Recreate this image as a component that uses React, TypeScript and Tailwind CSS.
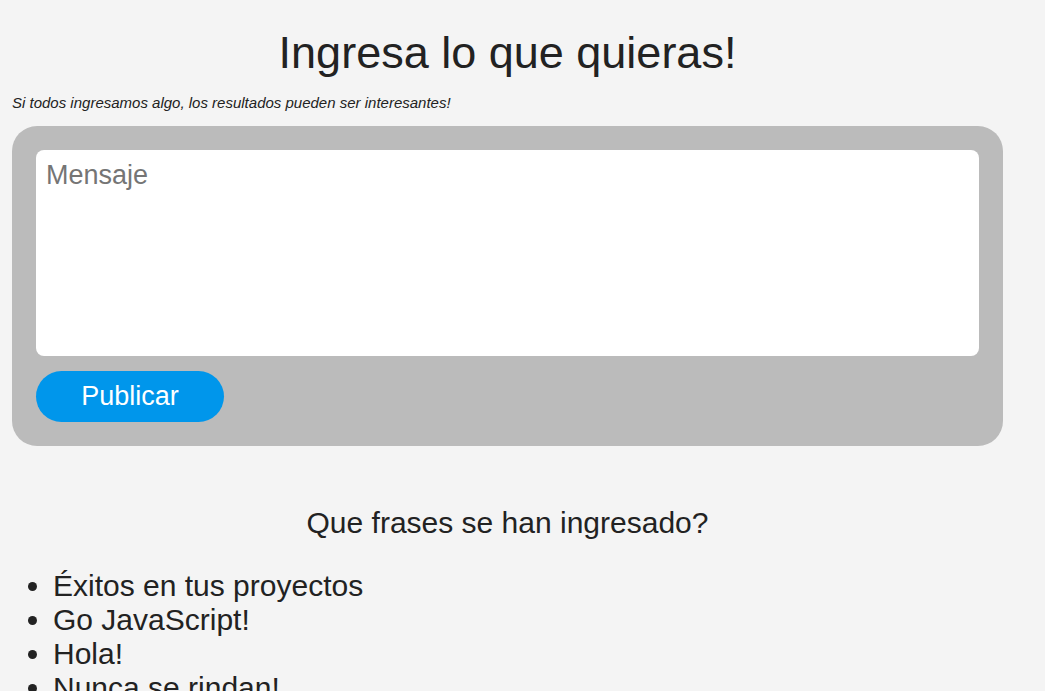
import { useState } from "react";

const frases = ["Éxitos en tus proyectos", "Go JavaScript!", "Hola!", "Nunca se rindan!"];

export default function App() {
  const [mensaje, setMensaje] = useState("");

  return (
    <div className="min-h-screen bg-[#f4f4f4] text-[#222] font-['Liberation_Sans',Arial,sans-serif]">
      <div className="w-[991px] ml-3 pt-[27px]">
        <h1 className="text-center text-[45px] leading-[52px]">Ingresa lo que quieras!</h1>
        <p className="mt-[15px] text-[15px] leading-[17px] italic">
          Si todos ingresamos algo, los resultados pueden ser interesantes!
        </p>

        <form
          onSubmit={(e) => e.preventDefault()}
          className="mt-[15px] rounded-[25px] bg-[#bbbbbb] p-6 flex flex-col gap-[15px]"
        >
          <textarea
            value={mensaje}
            onChange={(e) => setMensaje(e.target.value)}
            placeholder="Mensaje"
            className="h-[206px] w-full resize-none rounded-[8px] bg-white px-[10px] py-[8px] text-[27px] leading-[34px] text-[#222] placeholder:text-[#757575] outline-none"
          />
          <button
            type="submit"
            className="h-[51px] w-[188px] rounded-full bg-[#0096eb] text-[27px] text-white"
          >
            Publicar
          </button>
        </form>

        <h2 className="mt-[60px] text-center text-[30px] leading-[34px]">Que frases se han ingresado?</h2>

        <ul className="mt-[29px] list-disc pl-[41px] text-[30px] leading-[34px]">
          {frases.map((f) => (
            <li key={f}>{f}</li>
          ))}
        </ul>
      </div>
    </div>
  );
}
